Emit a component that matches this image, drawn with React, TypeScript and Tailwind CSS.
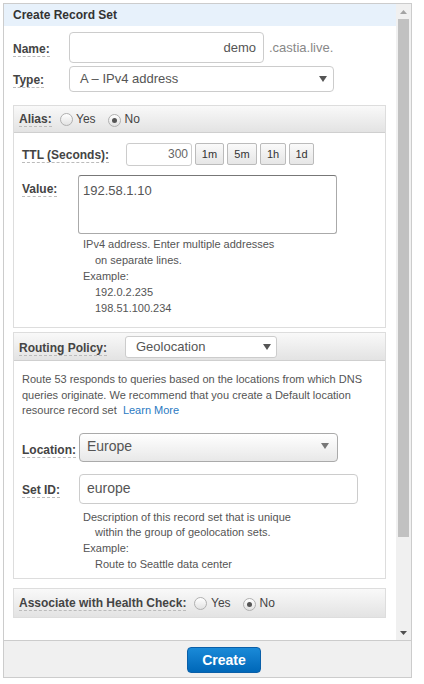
import React from "react";

const F = { fontFamily: '"Liberation Sans", Arial, sans-serif' };

function Label({ children, w }: { children: React.ReactNode; w: string }) {
  return (
    <div className={`${w} shrink-0`}>
      <span className="text-[12px] font-bold text-[#444] border-b border-dashed border-[#bbb] leading-[15px]">{children}</span>
    </div>
  );
}

function Radio({ checked }: { checked?: boolean }) {
  return (
    <span className="inline-flex w-[13px] h-[13px] rounded-full border border-[#b0b0b0] bg-gradient-to-b from-[#ffffff] to-[#e2e2e2] items-center justify-center shrink-0">
      {checked && <span className="w-[5px] h-[5px] rounded-full bg-[#555]" />}
    </span>
  );
}

function Arrow({ color = "#555" }: { color?: string }) {
  return (
    <svg width="8" height="6" viewBox="0 0 8 6">
      <path d="M0 0 L8 0 L4 6 Z" fill={color} />
    </svg>
  );
}

function TtlBtn({ t, w }: { t: string; w: string }) {
  return (
    <div className={`${w} h-[22px] ml-[3px] border border-[#bbb] rounded-[2px] bg-gradient-to-b from-[#fafafa] to-[#e6e6e6] flex items-center justify-center text-[11px] text-[#333]`}>
      {t}
    </div>
  );
}

export default function App() {
  return (
    <div className="w-[424px] h-[684px] bg-white p-[3px]" style={F}>
      <div className="w-[409px] h-[675px] border border-[#cccccc] flex flex-col">
        <div className="flex h-[636px]">
          <div className="w-[392px] flex flex-col">
            <div className="h-[22px] bg-[#e7f1fb] pl-[9px] flex items-center text-[12px] font-bold text-[#333]">Create Record Set</div>
            <div className="pl-[9px]">
              {/* Name */}
              <div className="flex items-center mt-[6px]">
                <Label w="w-[56px]">Name:</Label>
                <div className="w-[195px] h-[31px] border border-[#ccc] rounded-[4px] flex items-center justify-end pr-[7px] text-[13px] text-[#555]">demo</div>
                <span className="ml-[5px] text-[13px] text-[#888]">.castia.live.</span>
              </div>
              {/* Type */}
              <div className="flex items-center mt-[3px]">
                <Label w="w-[56px]">Type:</Label>
                <div className="w-[265px] h-[26px] border border-[#ccc] rounded-[4px] flex items-center pl-[10px] pr-[6px] text-[13px] text-[#555]">
                  <span className="flex-1">A – IPv4 address</span>
                  <Arrow />
                </div>
              </div>
              {/* Alias section */}
              <div className="mt-[13px] w-[373px] border border-[#dddddd]">
                <div className="h-[27px] bg-gradient-to-b from-[#f9f9f9] to-[#e3e3e3] border-b border-[#cfcfcf] flex items-center pl-[5px] text-[12px] text-[#444]">
                  <Label w="w-[41px]">Alias:</Label>
                  <Radio />
                  <span className="ml-[3px]">Yes</span>
                  <span className="ml-[12px]"><Radio checked /></span>
                  <span className="ml-[4px]">No</span>
                </div>
                <div className="pl-[8px] pb-[11px]">
                  <div className="flex items-center mt-[9px]">
                    <Label w="w-[104px]">TTL (Seconds):</Label>
                    <div className="w-[66px] h-[23px] border border-[#ccc] rounded-[3px] flex items-center justify-end pr-[3px] text-[12px] text-[#666]">300</div>
                    <TtlBtn t="1m" w="w-[29px]" />
                    <TtlBtn t="5m" w="w-[30px]" />
                    <TtlBtn t="1h" w="w-[26px]" />
                    <TtlBtn t="1d" w="w-[25px]" />
                  </div>
                  <div className="flex items-start mt-[9px]">
                    <div className="pt-[1px]"><Label w="w-[56px]">Value:</Label></div>
                    <div className="w-[259px] h-[59px] border border-[#aaa] border-t-[#777] rounded-[3px] pl-[4px] pt-[5px] text-[13px] text-[#555]">192.58.1.10</div>
                  </div>
                  <div className="ml-[61px] mt-[2px] text-[11px] leading-[16px] text-[#555]">
                    <div>IPv4 address. Enter multiple addresses</div>
                    <div className="pl-[12px]">on separate lines.</div>
                    <div>Example:</div>
                    <div className="pl-[12px]">192.0.2.235</div>
                    <div className="pl-[12px]">198.51.100.234</div>
                  </div>
                </div>
              </div>
              {/* Routing section */}
              <div className="mt-[4px] w-[373px] border border-[#dddddd]">
                <div className="h-[28px] bg-gradient-to-b from-[#f9f9f9] to-[#e3e3e3] border-b border-[#cfcfcf] flex items-center pl-[5px]">
                  <Label w="w-[106px]">Routing Policy:</Label>
                  <div className="w-[152px] h-[22px] border border-[#ccc] rounded-[3px] bg-white flex items-center pl-[10px] pr-[5px] text-[13px] text-[#555]">
                    <span className="flex-1">Geolocation</span>
                    <Arrow />
                  </div>
                </div>
                <div className="pl-[8px] pb-[6px]">
                  <div className="mt-[11px] text-[11px] leading-[15.5px] text-[#555]">
                    Route 53 responds to queries based on the locations from which DNS<br />
                    queries originate. We recommend that you create a Default location<br />
                    resource record set&nbsp; <span className="text-[#2a7ac2]">Learn More</span>
                  </div>
                  <div className="flex items-center mt-[14px]">
                    <div className="pt-[4px]"><Label w="w-[57px]">Location:</Label></div>
                    <div className="w-[259px] h-[29px] border border-[#aaa] rounded-[4px] bg-gradient-to-b from-[#ffffff] to-[#e8e8e8] flex items-center pl-[7px] pr-[8px] text-[14px] text-[#555] pb-[2px]">
                      <span className="flex-1">Europe</span>
                      <Arrow color="#777" />
                    </div>
                  </div>
                  <div className="flex items-center mt-[12px]">
                    <Label w="w-[57px]">Set ID:</Label>
                    <div className="w-[279px] h-[30px] border border-[#ccc] rounded-[4px] flex items-center pl-[7px] text-[14px] text-[#555]">europe</div>
                  </div>
                  <div className="ml-[61px] mt-[6px] text-[11px] leading-[15.7px] text-[#555]">
                    <div>Description of this record set that is unique</div>
                    <div className="pl-[12px]">within the group of geolocation sets.</div>
                    <div>Example:</div>
                    <div className="pl-[12px]">Route to Seattle data center</div>
                  </div>
                </div>
              </div>
              {/* Health check */}
              <div className="mt-[9px] w-[373px] h-[30px] border border-[#dddddd] bg-gradient-to-b from-[#f9f9f9] to-[#e3e3e3] flex items-center pl-[5px] text-[12px] text-[#444]">
                <Label w="w-[175px]">Associate with Health Check:</Label>
                <Radio />
                <span className="ml-[4px]">Yes</span>
                <span className="ml-[12px]"><Radio checked /></span>
                <span className="ml-[4px]">No</span>
              </div>
            </div>
          </div>
          {/* scrollbar */}
          <div className="w-[15px] bg-[#f0f0f0] flex flex-col items-center">
            <div className="h-[15px] flex items-center justify-center">
              <svg width="7" height="4" viewBox="0 0 7 4"><path d="M0 4 L7 4 L3.5 0 Z" fill="#a3a3a3" /></svg>
            </div>
            <div className="w-[11px] h-[518px] bg-[#c1c1c1]" />
            <div className="flex-1" />
            <div className="h-[15px] flex items-center justify-center">
              <svg width="7" height="4" viewBox="0 0 7 4"><path d="M0 0 L7 0 L3.5 4 Z" fill="#505050" /></svg>
            </div>
          </div>
        </div>
        <div className="flex-1 border-t border-[#cccccc] bg-[#f0f0f0] flex pl-[183px] pt-[6px]">
          <div className="w-[74px] h-[26px] rounded-[4px] border border-[#0a5fa8] bg-gradient-to-b from-[#1a8ad8] to-[#0067b8] flex items-center justify-center text-[14px] font-bold text-white">Create</div>
        </div>
      </div>
    </div>
  );
}
